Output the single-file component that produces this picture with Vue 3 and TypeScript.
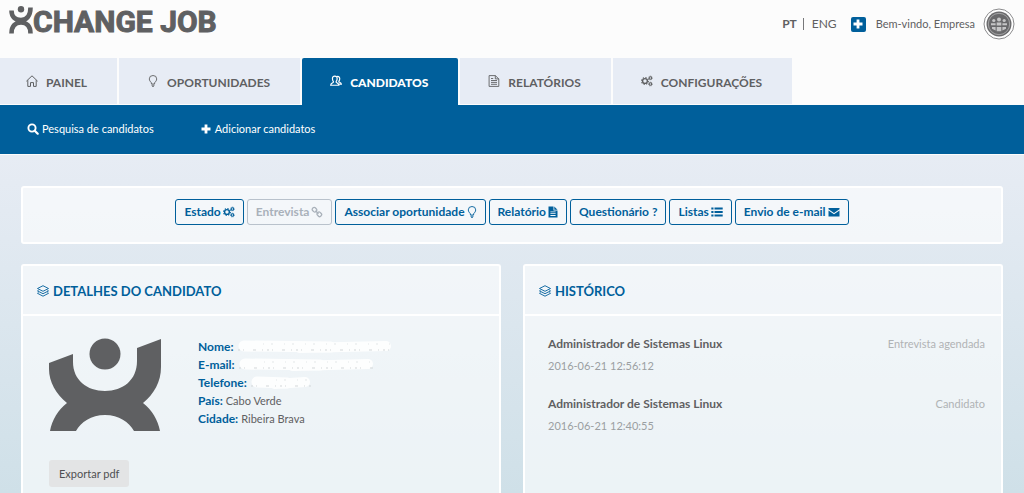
<script setup lang="ts">
interface Tab { label: string; icon: string; active?: boolean }
interface Action { label: string; icon: string; disabled?: boolean }
interface Entry { title: string; date: string; state: string }

const tabs: Tab[] = [
  { label: 'PAINEL', icon: 'home' },
  { label: 'OPORTUNIDADES', icon: 'bulb' },
  { label: 'CANDIDATOS', icon: 'users', active: true },
  { label: 'RELATÓRIOS', icon: 'doc' },
  { label: 'CONFIGURAÇÕES', icon: 'cogs' },
]
const actions: Action[] = [
  { label: 'Estado', icon: 'cogs' },
  { label: 'Entrevista', icon: 'link', disabled: true },
  { label: 'Associar oportunidade', icon: 'bulb' },
  { label: 'Relatório', icon: 'file' },
  { label: 'Questionário ?', icon: '' },
  { label: 'Listas', icon: 'list' },
  { label: 'Envio de e-mail', icon: 'mail' },
]
const history: Entry[] = [
  { title: 'Administrador de Sistemas Linux', date: '2016-06-21 12:56:12', state: 'Entrevista agendada' },
  { title: 'Administrador de Sistemas Linux', date: '2016-06-21 12:40:55', state: 'Candidato' },
]
const hidden = [
  { label: 'Nome:', width: 156 },
  { label: 'E-mail:', width: 137 },
  { label: 'Telefone:', width: 62 },
]
</script>

<template>
  <svg class="defs" aria-hidden="true">
    <symbol id="home" viewBox="0 0 12 12"><path d="M.4 6.2 6 .8l5.600 5.400M1.800 5.200v6.200h2.700V7.600h3v3.800h2.700V5.200" fill="none" stroke="currentColor" /></symbol>
    <symbol id="bulb" viewBox="0 0 10 12"><path d="M3.400 9V7.800C2.600 6.800 1.300 5.700 1.300 3.900a3.700 3.400 0 0 1 7.400 0C8.700 5.700 7.400 6.800 6.600 7.800V9zM3.500 10.200h3M4.200 11.500h1.600" fill="none" stroke="currentColor" stroke-width=".9" /></symbol>
    <symbol id="users" viewBox="0 0 13 12"><path d="M5.200.8c1.800 0 2.700 1.200 2.500 3 0 1.300-.5 2.100-1 2.600v1c1 .7 2.800 1 2.900 3.200H.7C.8 8.400 2.600 8.100 3.600 7.400v-1C3 5.800 2.700 5 2.700 3.800c-.2-1.800.7-3 2.500-3zM7.500 1.200c2-.5 3.200.7 3 2.600 0 1.200-.4 1.900-.9 2.400v.8c1 .6 2.500.7 2.700 2.300H9.500" fill="none" stroke="currentColor" stroke-width="1.300" /></symbol>
    <symbol id="doc" viewBox="0 0 11 12"><path d="M.6.6h6.200l3.500 3.300v7.500H.6zM6.800.6v3.300h3.500M2.500 5.500h6M2.500 7.400h6M2.500 9.300h6M2.500 3.500h2.200" fill="none" stroke="currentColor" stroke-width=".9" /></symbol>
    <symbol id="cogs" viewBox="0 0 13 12">
      <g fill="none" stroke="currentColor">
        <circle cx="4.300" cy="6" r="2.600" stroke-width="1.500" /><circle cx="4.300" cy="6" r="3.700" stroke-width="1.200" stroke-dasharray="1.450 1.450" />
        <circle cx="10.200" cy="2.700" r="1.400" stroke-width="1.100" /><circle cx="10.200" cy="2.700" r="2.100" stroke-width=".7" stroke-dasharray=".9 .75" />
        <circle cx="10.200" cy="9.300" r="1.400" stroke-width="1.100" /><circle cx="10.200" cy="9.300" r="2.100" stroke-width=".7" stroke-dasharray=".9 .75" />
      </g>
    </symbol>
    <symbol id="link" viewBox="0 0 12 12"><g fill="none" stroke="currentColor" stroke-width="1.300"><rect x="1.200" y="1.800" width="4.600" height="3.800" rx="1.500" transform="rotate(45 3.500 3.700)" /><rect x="6" y="6.400" width="4.600" height="3.800" rx="1.500" transform="rotate(45 8.300 8.300)" /><path d="M4.500 4.700l3 3" /></g></symbol>
    <symbol id="file" viewBox="0 0 10 12"><path fill="currentColor" fill-rule="evenodd" d="M.5.5h5v4h4v7h-9zM6.300.5 9.500 3.700H6.300zM2.400 5.500v.8h5.200v-.8zM2.400 7.300v.8h5.200v-.8zM2.400 9.100v.8h5.200v-.8z" /></symbol>
    <symbol id="list" viewBox="0 0 12 12"><path fill="currentColor" d="M.3 1.500h2.200v2H.3zM3.500 1.500h8.200v2H3.500zM.3 5h2.200v2H.3zM3.500 5h8.200v2H3.500zM.3 8.500h2.200v2H.3zM3.500 8.500h8.200v2H3.500z" /></symbol>
    <symbol id="mail" viewBox="0 0 12 12"><path fill="currentColor" d="M.5 2h11v1.200L6 7 .5 3.200zM.5 4.600 6 8.300l5.500-3.700V10.500H.5z" /></symbol>
    <symbol id="search" viewBox="0 0 12 12"><circle cx="5" cy="5" r="3.600" fill="none" stroke="currentColor" stroke-width="1.900" /><path d="m7.700 7.700 3 3" stroke="currentColor" stroke-width="2.200" stroke-linecap="round" /></symbol>
    <symbol id="plus" viewBox="0 0 12 12"><path d="M6 1.500v9M1.500 6h9" stroke="currentColor" stroke-width="2.800" /></symbol>
    <symbol id="layers" viewBox="0 0 12 12"><path d="M6 .7 11.500 3.500 6 6.300.5 3.500zM1.600 5.200.5 5.900 6 8.700l5.500-2.800-1.100-.7M1.600 7.600.5 8.300 6 11.200l5.500-2.900-1.100-.7" fill="none" stroke="currentColor" stroke-width=".9" /></symbol>
  </svg>

  <div class="page">
    <header class="top">
      <a class="logo" href="#" aria-label="XCHANGE JOB">
        <svg class="mark" viewBox="0 0 24 28" aria-hidden="true">
          <circle cx="12" cy="3.300" r="3.200" fill="currentColor" />
          <path d="M2.500 4.500C2.500 11 6.500 14 12 14s9.500-4 9.500-12.500M2.500 27.500C2.500 20 6.500 16.500 12 16.500s9.500 3.500 9.500 11" fill="none" stroke="currentColor" stroke-width="4.600" />
        </svg>
        <span>CHANGE JOB</span>
      </a>
      <div class="account">
        <a href="#" class="lang current">PT</a><span class="bar"></span><a href="#" class="lang">ENG</a>
        <button class="add" type="button" aria-label="Adicionar"><svg class="icon"><use href="#plus" /></svg></button>
        <span class="welcome">Bem-vindo, Empresa</span>
        <svg class="avatar" viewBox="0 0 32 32" aria-hidden="true">
          <circle cx="16" cy="16" r="15" fill="#fff" stroke="#8b8b8d" />
          <circle cx="16" cy="16" r="12.500" fill="#69696b" />
          <circle cx="16" cy="16" r="10.700" fill="none" stroke="#b4b4b5" stroke-width=".8" />
          <g fill="#c5c5c6"><circle cx="16" cy="11.500" r="2" /><circle cx="10.800" cy="12.500" r="1.600" /><circle cx="21.200" cy="12.500" r="1.600" /><path d="M8 15.200h4.600v2H8zM13.700 14.500h4.600v3h-4.600zM19.400 15.200H24v2h-4.600zM9 19h3.600v3.500L9 20.800zM13.700 19h4.600v4.300h-4.600zM19.400 19H23v1.800l-3.600 1.700z" /></g>
        </svg>
      </div>
    </header>

    <nav class="tabs">
      <a v-for="t in tabs" :key="t.label" href="#" class="tab" :class="{ active: t.active }">
        <svg class="icon"><use :href="'#' + t.icon" /></svg><span>{{ t.label }}</span>
      </a>
    </nav>
    <nav class="subnav">
      <a href="#"><svg class="icon"><use href="#search" /></svg>Pesquisa de candidatos</a>
      <a href="#"><svg class="icon"><use href="#plus" /></svg>Adicionar candidatos</a>
    </nav>

    <main class="content">
      <section class="panel actions">
        <button v-for="a in actions" :key="a.label" type="button" :disabled="a.disabled">
          {{ a.label }}<svg v-if="a.icon" class="icon" :class="a.icon"><use :href="'#' + a.icon" /></svg>
        </button>
      </section>

      <div class="columns">
        <section class="panel card">
          <h2><svg class="icon"><use href="#layers" /></svg>DETALHES DO CANDIDATO</h2>
          <div class="details">
            <svg class="photo" viewBox="0 0 112 94" role="img" aria-label="Candidato">
              <circle cx="56" cy="16" r="15.500" />
              <path d="M0 25 24 16v8c0 18 14 29 32 29s32-11 32-30V10l24-9v28c0 15-7 27-18 36 9 7 15 17 17 28H85C80 84 70 77 56 77s-24 7-29 16H1c2-11 8-21 17-28C7 56 0 44 0 31z" />
            </svg>
            <dl>
              <div v-for="h in hidden" :key="h.label">
                <dt>{{ h.label }}</dt>
                <dd>
                  <svg class="smudge" :width="h.width" height="14" aria-hidden="true">
                    <line x1="7" y1="6" :x2="h.width * 0.6" y2="7" stroke="#fdfefe" stroke-width="11" stroke-linecap="round" />
                    <line :x1="h.width * 0.4" y1="8" :x2="h.width - 7" y2="6" stroke="#fdfefe" stroke-width="10" stroke-linecap="round" />
                    <line x1="1" y1="10" :x2="h.width" y2="10" stroke="#d3d7d9" stroke-dasharray="2 3 1 9 3 6 1 4" />
                    <line x1="26" y1="4" :x2="h.width" y2="4" stroke="#e3e7e8" stroke-dasharray="1 7 2 11" />
                  </svg>
                </dd>
              </div>
              <div><dt>País:</dt><dd>Cabo Verde</dd></div>
              <div><dt>Cidade:</dt><dd>Ribeira Brava</dd></div>
            </dl>
          </div>
          <button class="export" type="button">Exportar pdf</button>
        </section>

        <section class="panel card">
          <h2><svg class="icon"><use href="#layers" /></svg>HISTÓRICO</h2>
          <ul>
            <li v-for="e in history" :key="e.date">
              <div><strong>{{ e.title }}</strong><time>{{ e.date }}</time></div>
              <span>{{ e.state }}</span>
            </li>
          </ul>
        </section>
      </div>
    </main>
  </div>
</template>

<style>
html, body { margin: 0; }
</style>

<style scoped>
* { box-sizing: border-box; }
.defs { display: none; }
.page { display: flex; flex-direction: column; min-height: 100vh; background: #fcfcfc; color: #5f6062; font: 12px/18px Lato, sans-serif; }
a { color: inherit; text-decoration: none; }
button { font: inherit; cursor: pointer; }
.icon { width: 12px; height: 12px; flex: none; }

.top { display: flex; justify-content: space-between; height: 58px; padding: 6px 9px 0; }
.logo { display: flex; align-items: flex-start; height: 32px; font: bold 30px/32px Roboto, sans-serif; -webkit-text-stroke: 1px currentColor; }
.mark { width: 24px; height: 28px; }
.account { display: flex; align-items: center; height: 36px; }
.lang.current { font-weight: bold; }
.bar { width: 1px; height: 12px; margin: 0 8px 0 6px; background: #77787a; }
.add { display: flex; align-items: center; justify-content: center; width: 15px; height: 15px; margin: 0 10px 0 14px; padding: 0; border: 0; border-radius: 2px; background: #005f9b; color: #fff; }
.welcome { font-size: 11px; }
.avatar { width: 32px; height: 32px; margin-left: 8px; }

.tabs { display: flex; gap: 2px; height: 47px; }
.tab { display: flex; align-items: center; gap: 8px; padding: 3px 30px 0 28px; border-bottom: 1px solid #fcfcfc; background: #e7ecf5; font-weight: bold; }
.tab:first-child { padding-left: 26px; }
.tab .icon { margin-bottom: 4px; }
.tab.active { border-radius: 2px 2px 0 0; border-color: #005f9b; background: #005f9b; color: #fff; font-weight: 900; }
.subnav { display: flex; gap: 46px; height: 49px; padding: 0 27px 2px; align-items: center; background: #005f9b; color: #fff; font-size: 11px; }
.subnav a { display: flex; align-items: center; gap: 3px; }

.content { display: flex; flex: 1; flex-direction: column; gap: 20px; margin-top: 1px; padding: 31px 21px 0; background: linear-gradient(#e7ecf4, #cfe0e8); }
.panel { border: 2px solid #fff; border-radius: 3px; background: rgba(255, 255, 255, 0.6); }
.actions { display: flex; justify-content: center; gap: 3px; padding: 11px 10px 17px; }
.actions button { display: flex; align-items: center; gap: 2px; height: 26px; padding: 0 8px; border: 1px solid #005f9b; border-radius: 3px; background: transparent; color: #005f9b; font-weight: bold; }
.actions button:disabled { border-color: #b9c2cc; color: #a9b1ba; }
.actions .bulb, .actions .file { width: 10px; }

.columns { display: grid; flex: 1; grid-template-columns: 1fr 1fr; gap: 22px; }
.card { border-bottom: 0; border-radius: 3px 3px 0 0; }
h2 { display: flex; align-items: center; gap: 4px; height: 50px; margin: 0; padding: 2px 14px 0; border-bottom: 2px solid #fff; color: #005f9b; font-size: 13px; font-weight: bold; }
.details { display: flex; gap: 37px; padding: 22px 26px 0; }
.photo { width: 112px; height: 94px; fill: #5f6062; }
dl { margin: 0; }
dl div { display: flex; gap: 3px; height: 18px; }
dt { color: #005f9b; font-weight: bold; }
dd { margin: 0; font-size: 11px; }
.smudge { display: block; margin-top: 2px; }
.export { height: 27px; margin: 28px 26px 0; padding: 0 10px; border: 0; border-radius: 3px; background: #e3e4e5; color: #4f5052; font-size: 11px; }
ul { display: grid; gap: 16px; margin: 0; padding: 17px 16px 0 23px; list-style: none; }
li { display: flex; justify-content: space-between; line-height: 22px; }
strong, time { display: block; }
time { color: #9b9fa2; font-size: 11px; }
li span { color: #b0b3b5; font-size: 11px; }
</style>
